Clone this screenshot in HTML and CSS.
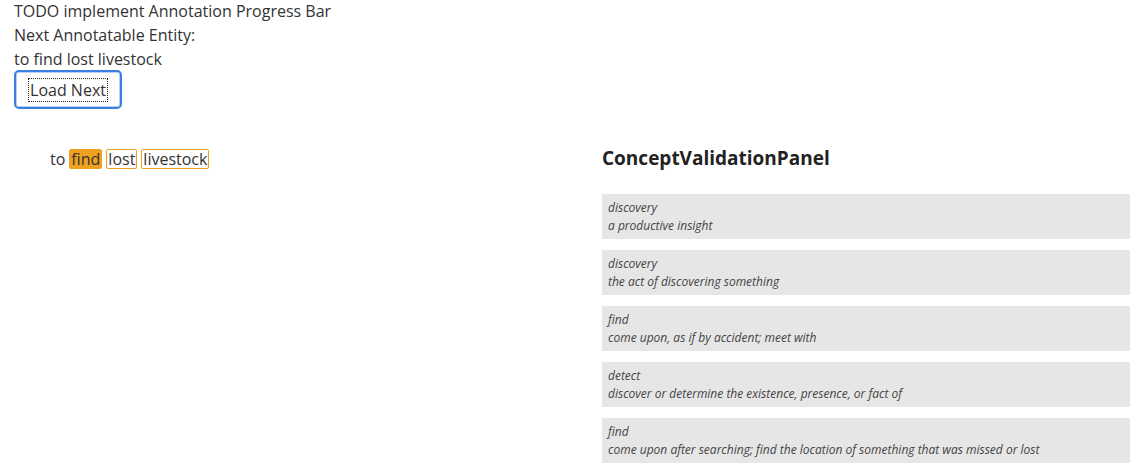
FILE: index.html
```html
<!DOCTYPE html>
<html>
<head>
<meta charset="utf-8">
<link rel="stylesheet" href="styles.css">
</head>
<body>
<div class="top">
  <div class="line">TODO implement Annotation Progress Bar</div>
  <div class="line">Next Annotatable Entity:</div>
  <div class="line">to find lost livestock</div>
  <button class="btn"><span class="btn-label">Load Next</span></button>
</div>
<div class="main">
  <div class="left">
    <div class="sentence">
      <span class="word">to</span>
      <span class="tok tok-active">find</span>
      <span class="tok">lost</span>
      <span class="tok">livestock</span>
    </div>
  </div>
  <div class="right">
    <h2 class="panel-title">ConceptValidationPanel</h2>
    <div class="cards">
      <div class="card"><div class="term">discovery</div><div class="gloss">a productive insight</div></div>
      <div class="card"><div class="term">discovery</div><div class="gloss">the act of discovering something</div></div>
      <div class="card"><div class="term">find</div><div class="gloss">come upon, as if by accident; meet with</div></div>
      <div class="card"><div class="term">detect</div><div class="gloss">discover or determine the existence, presence, or fact of</div></div>
      <div class="card"><div class="term">find</div><div class="gloss">come upon after searching; find the location of something that was missed or lost</div></div>
    </div>
  </div>
</div>
</body>
</html>
```

FILE: styles.css
```css
html, body {
  margin: 0;
  padding: 0;
}
body {
  font-family: "Open Sans", "DejaVu Sans", sans-serif;
  font-size: 16px;
  line-height: 24px;
  color: #333;
  background: #fff;
  padding-left: 14px;
  overflow: hidden;
}
.top {
  display: flex;
  flex-direction: column;
  align-items: flex-start;
  margin-top: -1px;
}
.btn {
  margin-top: -1px;
  width: 108px;
  height: 39px;
  font-family: inherit;
  font-size: 16px;
  color: #333;
  background: #fff;
  border: 2px solid #3b7fe0;
  border-radius: 5px;
  box-shadow: 0 0 0 1px #b9d1f3 inset;
  padding: 0;
  display: flex;
  align-items: center;
  justify-content: center;
}
.btn-label {
  outline: 1px dotted #222;
  line-height: 22px;
  padding: 0 1px;
}
.main {
  display: flex;
  margin-top: 36px;
}
.left {
  width: 588px;
  flex: none;
  padding-left: 36px;
  box-sizing: border-box;
  padding-top: 2px;
}
.sentence {
  display: flex;
  align-items: center;
  gap: 4px;
}
.tok {
  border: 1px solid #f0a020;
  border-radius: 2px;
  padding: 0 1px;
  line-height: 18px;
}
.tok-active {
  background: #f0a020;
}
.right {
  flex: 1;
  padding-right: 11px;
}
.panel-title {
  margin: 0;
  font-size: 19px;
  line-height: 26px;
  font-weight: 700;
  color: #222;
}
.cards {
  margin-top: 23px;
  display: flex;
  flex-direction: column;
  gap: 11px;
}
.card {
  background: #e6e6e6;
  padding: 5px 6px 4px;
  font-size: 12px;
  line-height: 18px;
  font-style: italic;
  color: #444;
}
```
